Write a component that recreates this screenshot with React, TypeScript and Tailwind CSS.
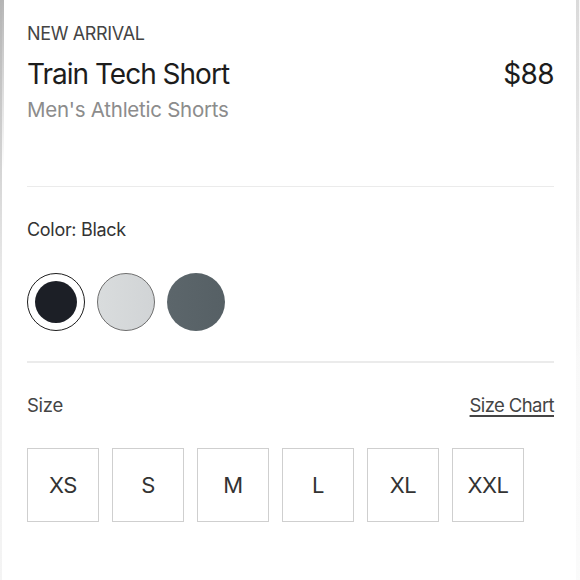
import React from "react";

export default function App() {
  const sizes = ["XS", "S", "M", "L", "XL", "XXL"];
  return (
    <div
      className="relative w-[580px] h-[580px] bg-white overflow-hidden"
      style={{ fontFamily: "Inter, 'Noto Sans', sans-serif" }}
    >
      {/* edge shading from the original photo */}
      <div className="absolute left-0 top-0 w-[4px] h-[170px] bg-gradient-to-b from-[#a3a3a3] to-transparent opacity-80" />
      <div className="absolute left-0 top-0 w-[2px] h-[580px] bg-gradient-to-b from-[#b5b5b5] via-[#ececec] to-[#f4f4f4]" />
      <div className="absolute right-[1px] top-0 w-[3px] h-[360px] bg-gradient-to-b from-[#a8a8a8] to-transparent opacity-80" />
      <div className="absolute right-0 top-0 w-[4px] h-[580px] bg-gradient-to-b from-[#f0f0f0] to-[#f7f7f7] opacity-60" />

      <div className="flex flex-col pl-[27px] pr-[26px] pt-[25px]">
        <div className="text-[18px] leading-none text-[#444] tracking-[-0.35px]">
          NEW ARRIVAL
        </div>
        <div className="mt-[17px] flex items-baseline justify-between">
          <div className="text-[28px] leading-none text-[#1c1c1c] tracking-[-1px]">
            Train Tech Short
          </div>
          <div className="text-[28px] leading-none text-[#1c1c1c] tracking-[-0.6px]">
            $88
          </div>
        </div>
        <div className="mt-[12px] text-[20.5px] leading-none text-[#8c8c8c] tracking-[-0.25px]">
          Men's Athletic Shorts
        </div>

        <div className="mt-[65px] h-[1.5px] bg-[#ebebeb]" />

        <div className="mt-[34px] text-[18px] leading-none text-[#333] tracking-[-0.3px]">
          Color: Black
        </div>
        <div className="mt-[34px] flex gap-[12px]">
          <div className="w-[58px] h-[58px] rounded-full border-[1.5px] border-[#1e1e1e] flex items-center justify-center">
            <div className="w-[42px] h-[42px] rounded-full bg-[#1c1f26]" />
          </div>
          <div className="w-[58px] h-[58px] rounded-full border-[1.5px] border-[#6e6e6e] bg-gradient-to-r from-[#d9dcdd] to-[#d1d4d6]" />
          <div className="w-[58px] h-[58px] rounded-full bg-gradient-to-r from-[#5c666b] to-[#566065]" />
        </div>

        <div className="mt-[30px] h-[1.5px] bg-[#ebebeb]" />

        <div className="mt-[33px] flex items-baseline justify-between">
          <div className="text-[18.5px] leading-none text-[#444] tracking-[-0.3px]">
            Size
          </div>
          <div className="text-[18.5px] leading-none text-[#444] underline underline-offset-[3px] decoration-[1.5px] tracking-[-0.6px]">
            Size Chart
          </div>
        </div>

        <div className="mt-[34px] flex gap-[13px]">
          {sizes.map((s) => (
            <div
              key={s}
              className="w-[72px] h-[74px] border-[1.5px] border-[#cfcfcf] flex items-center justify-center text-[22px] text-[#333] tracking-[-0.5px]"
            >
              {s}
            </div>
          ))}
        </div>
      </div>
    </div>
  );
}
